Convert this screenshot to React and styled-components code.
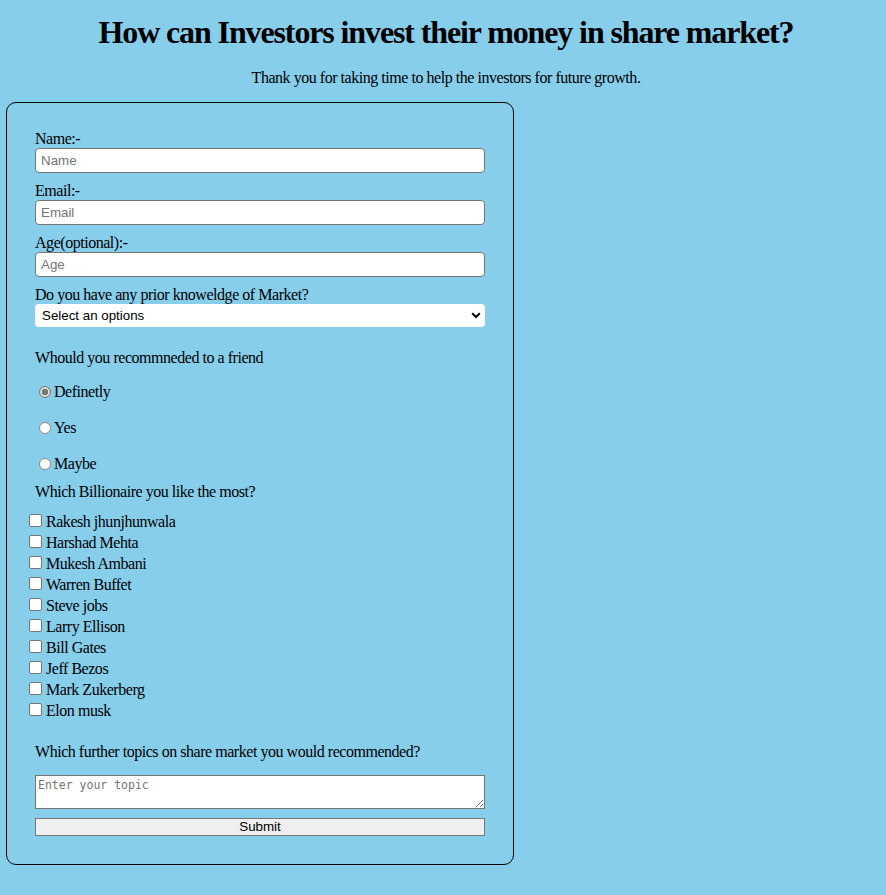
import React from "react";
import styled, { createGlobalStyle } from "styled-components";

const GlobalStyle = createGlobalStyle`
  html, body {
    margin: 0;
    background: #87ceeb;
    font-family: "Liberation Serif", "Times New Roman", serif;
    letter-spacing: -0.029em;
    color: #000;
  }
`;

const Page = styled.div`
  padding: 14px 0 31px 6px;
`;

const Title = styled.h1`
  margin: 0;
  text-align: center;
  font-size: 32px;
  line-height: 37px;
  font-weight: bold;
  letter-spacing: -0.035em;
`;

const Subtitle = styled.p`
  margin: 18px 0 15px;
  text-align: center;
  font-size: 16px;
  line-height: 18px;
`;

const Form = styled.form`
  box-sizing: border-box;
  width: 508px;
  border: 1px solid #000;
  border-radius: 10px;
  padding: 27px 28px 28px 28px;
  font-size: 16px;
  line-height: 18px;
`;

const Label = styled.label`
  display: block;
  margin-top: ${(p) => p.$top || 0}px;
  height: 18px;
`;

const TextInput = styled.input`
  display: block;
  box-sizing: border-box;
  width: 450px;
  height: 25px;
  margin: 0;
  padding: 1px 5px;
  border: 1px solid #767676;
  border-radius: 4px;
  background: #fff;
  font-family: "Liberation Sans", Arial, sans-serif;
  font-size: 13.33px;
  &::placeholder {
    color: #757575;
  }
`;

const SelectWrap = styled.div`
  position: relative;
  width: 450px;
`;

const Select = styled.select`
  appearance: none;
  display: block;
  box-sizing: border-box;
  width: 450px;
  height: 23px;
  margin: 0;
  padding: 0 24px 0 7px;
  border: none;
  border-radius: 4px;
  background: #fff;
  font-family: "Liberation Sans", Arial, sans-serif;
  font-size: 13.33px;
  color: #000;
`;

const Chevron = styled.svg`
  position: absolute;
  right: 4px;
  top: 8px;
  width: 10px;
  height: 7px;
  pointer-events: none;
`;

const RadioRow = styled.div`
  display: flex;
  align-items: center;
  height: 18px;
  margin-top: ${(p) => p.$top}px;
`;

const Radio = styled.input.attrs({ type: "radio" })`
  appearance: none;
  box-sizing: border-box;
  width: 12px;
  height: 12px;
  margin: 0 3px 0 4px;
  border: 1px solid #8a8a8a;
  border-radius: 50%;
  background: #fff;
  &:checked {
    background: radial-gradient(circle, #767676 0 3px, #d9d9d9 3.5px);
    border-color: #767676;
  }
`;

const CheckList = styled.div`
  margin: 10px 0 0 -10px;
`;

const CheckRow = styled.div`
  display: flex;
  align-items: center;
  height: 21px;
`;

const Check = styled.input.attrs({ type: "checkbox" })`
  appearance: none;
  box-sizing: border-box;
  width: 13px;
  height: 13px;
  margin: -3px 4px 0 4px;
  border: 1px solid #767676;
  border-radius: 2px;
  background: #fff;
`;

const TextArea = styled.textarea`
  display: block;
  box-sizing: border-box;
  width: 450px;
  height: 34px;
  margin: 14px 0 0;
  padding: 2px;
  border: 1px solid #767676;
  font-family: "DejaVu Sans Mono", "Liberation Mono", monospace;
  font-size: 11.5px;
  &::placeholder {
    color: #757575;
  }
`;

const Submit = styled.button`
  display: block;
  box-sizing: border-box;
  width: 450px;
  height: 18px;
  margin-top: 9px;
  padding: 0;
  border: 1px solid #767676;
  background: #efefef;
  font-family: "Liberation Sans", Arial, sans-serif;
  font-size: 13.33px;
  line-height: 16px;
  color: #000;
`;

const billionaires = [
  "Rakesh jhunjhunwala",
  "Harshad Mehta",
  "Mukesh Ambani",
  "Warren Buffet",
  "Steve jobs",
  "Larry Ellison",
  "Bill Gates",
  "Jeff Bezos",
  "Mark Zukerberg",
  "Elon musk",
];

const App = () => {
  return (
    <>
      <GlobalStyle />
      <Page>
        <Title>How can Investors invest their money in share market?</Title>
        <Subtitle>
          Thank you for taking time to help the investors for future growth.
        </Subtitle>
        <Form onSubmit={(e) => e.preventDefault()}>
          <Label>Name:-</Label>
          <TextInput placeholder="Name" />
          <Label $top={9}>Email:-</Label>
          <TextInput placeholder="Email" />
          <Label $top={9}>Age(optional):-</Label>
          <TextInput placeholder="Age" />
          <Label $top={9}>Do you have any prior knoweldge of Market?</Label>
          <SelectWrap>
            <Select defaultValue="">
              <option value="">Select an options</option>
              <option>Yes</option>
              <option>No</option>
            </Select>
            <Chevron viewBox="0 0 10 7">
              <path
                d="M1.2 1.3 L5 5 L8.8 1.3"
                fill="none"
                stroke="#000"
                strokeWidth="2"
              />
            </Chevron>
          </SelectWrap>
          <Label $top={22}>Whould you recommneded to a friend</Label>
          <RadioRow $top={16}>
            <Radio name="rec" defaultChecked />
            Definetly
          </RadioRow>
          <RadioRow $top={18}>
            <Radio name="rec" />
            Yes
          </RadioRow>
          <RadioRow $top={18}>
            <Radio name="rec" />
            Maybe
          </RadioRow>
          <Label $top={10}>Which Billionaire you like the most?</Label>
          <CheckList>
            {billionaires.map((name) => (
              <CheckRow key={name}>
                <Check />
                {name}
              </CheckRow>
            ))}
          </CheckList>
          <Label $top={22}>
            Which further topics on share market you would recommended?
          </Label>
          <TextArea placeholder="Enter your topic" />
          <Submit type="submit">Submit</Submit>
        </Form>
      </Page>
    </>
  );
};

export default App;
